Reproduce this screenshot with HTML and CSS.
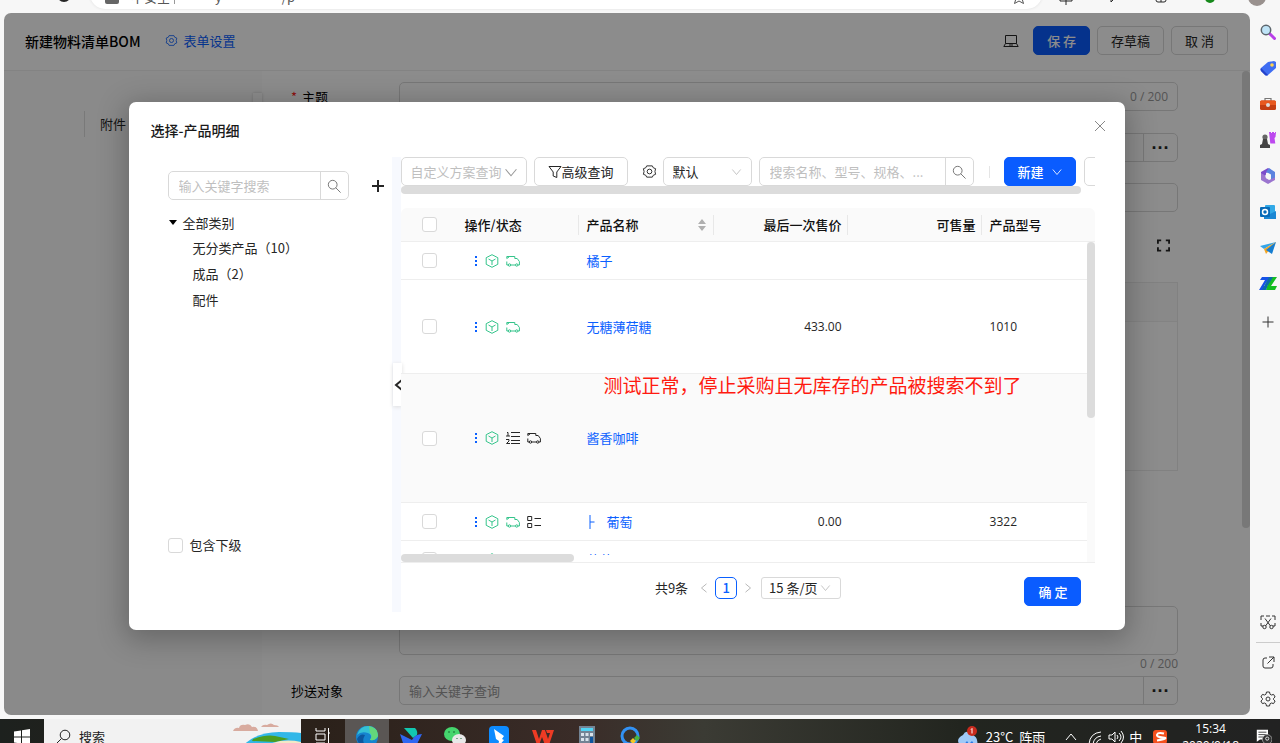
FILE: index.html
```html
<!DOCTYPE html>
<html lang="zh-CN">
<head>
<meta charset="utf-8">
<title>新建物料清单BOM</title>
<link rel="stylesheet" href="styles.css">
</head>
<body>
<svg class="defs" aria-hidden="true">
  <symbol id="search" viewBox="0 0 16 16"><circle cx="6.5" cy="6.5" r="5"/><path d="M10 10l5.500 5.500"/></symbol>
  <symbol id="down" viewBox="0 0 12 12"><path d="M1 3l5 6 5-6"/></symbol>
  <symbol id="left" viewBox="0 0 12 12"><path d="M9 1L3 6l6 5"/></symbol>
  <symbol id="right" viewBox="0 0 12 12"><path d="M3 1l6 5-6 5"/></symbol>
  <symbol id="nut" viewBox="0 0 16 16"><path d="M5 2h6l1 2 2.500 1-.7 3 .7 3-2.500 1-1 2H5l-1-2-2.500-1 .7-3-.7-3L4 4z"/><circle cx="8" cy="8" r="2.500"/></symbol>
  <symbol id="cube" viewBox="0 0 14 14"><path d="M7 .7l5.800 3v6.600L7 13.300l-5.800-3V3.700zM3.500 5L7 7l3.500-2M7 7v4"/></symbol>
  <symbol id="truck" viewBox="0 0 14 14"><path d="M2.500 11H.8V7.500M.8 4.500V2.500h8v2h2.400l2.200 3V11h-1.400M9.500 11h-5M.8 4.500L3 3"/><circle cx="3.500" cy="11" r="1.200"/><circle cx="10.700" cy="11" r="1.200"/></symbol>
  <symbol id="numlist" viewBox="0 0 14 14"><path d="M5 1.500h9M5 5.500h9M5 9.500h9M5 12.500h9M1 1.500h1v3.500M0 5h4M0 8.500h3v1.500L.5 12.500H4"/></symbol>
  <symbol id="detail" viewBox="0 0 14 14"><path d="M.7 1.500h4v4h-4zM.7 8.500h4v4h-4zM7.500 3.500H14M7.500 10.500H14"/></symbol>
  <symbol id="dots" viewBox="0 0 4 14"><path d="M1 2h2v2H1zM1 6h2v2H1zM1 10h2v2H1z"/></symbol>
</svg>

<div class="browser-top">
  <div class="browser-bar">
    <svg class="reload line" viewBox="0 0 16 16"><circle cx="8" cy="8" r="6"/></svg>
    <div class="address"><i class="lock"></i><span>不安全</span><i class="bar"></i><span class="url">y</span><span class="url-end">/p</span>
      <svg class="star line" viewBox="0 0 16 16"><path d="M8 2l2 4 5 .5-4 3 1.500 5L8 12l-4.500 2.500L5 9.500l-4-3L6 6z"/></svg></div>
    <div class="browser-tools">
      <svg class="line" viewBox="0 0 16 16"><path d="M2 4v8h12V4M8 2v14"/></svg>
      <svg class="line" viewBox="0 0 16 16"><path d="M5 3v10l5-5"/></svg>
      <svg class="line" viewBox="0 0 16 16"><rect x="3" y="2" width="10" height="11" rx="2"/><path d="M8 6v7"/></svg>
      <svg viewBox="0 0 16 16"><circle cx="9" cy="9" r="5" fill="#16891b"/><path d="M6.500 9l2 2 3-4" stroke="#fff" fill="none"/></svg>
      <i class="avatar"></i>
    </div>
  </div>
</div>

<div class="middle">
  <div class="app">
    <header class="app-head">
      <h1>新建物料清单BOM</h1>
      <a href="#" class="form-set"><svg class="line"><use href="#nut"/></svg>表单设置</a>
      <div class="head-actions">
        <svg class="line laptop" viewBox="0 0 16 16"><path d="M2.500 2.500h11v8h-11zM2.500 10.500L.8 13.500h14.400l-1.700-3M6 12h4"/></svg>
        <button class="btn primary">保 存</button>
        <button class="btn">存草稿</button>
        <button class="btn">取 消</button>
      </div>
    </header>
    <div class="app-body">
      <nav class="side"><a href="#">附件</a><i class="side-tab"></i></nav>
      <main class="form">
        <div class="row"><label for="topic"><b>*</b> 主题</label><div class="field"><input id="topic"><span class="count">0 / 200</span></div></div>
        <div class="row"><span class="lab"></span><div class="field"><input aria-label="物料"><button class="more" aria-label="更多">···</button></div></div>
        <div class="row"><span class="lab"></span><div class="field"><input aria-label="数量"></div></div>
        <div class="expand"><svg class="line" viewBox="0 0 14 14"><path d="M1 5V1.500h3.500M9.500 1.500H13V5M13 9v3.500H9.500M4.500 12.500H1V9"/></svg></div>
        <div class="sheet"></div>
        <div class="row area"><span class="lab"></span><div class="field"><textarea aria-label="备注"></textarea></div></div>
        <div class="area-count">0 / 200</div>
        <div class="row"><label for="cc">抄送对象</label><div class="field"><input id="cc" placeholder="输入关键字查询"><button class="more" aria-label="选择">···</button></div></div>
      </main>
      <i class="page-scroll"></i>
    </div>

    <div class="mask">
      <section class="modal" role="dialog" aria-label="选择-产品明细">
        <div class="modal-head"><h2>选择-产品明细</h2>
          <button class="close" aria-label="关闭"><svg class="line" viewBox="0 0 12 12"><path d="M1 1l10 10M11 1L1 11"/></svg></button></div>
        <div class="modal-body">
          <aside class="cats">
            <div class="cat-search">
              <div class="search"><input placeholder="输入关键字搜索" aria-label="输入关键字搜索"><button aria-label="搜索"><svg class="line"><use href="#search"/></svg></button></div>
              <button class="plus" aria-label="添加"><svg class="line" viewBox="0 0 14 14"><path d="M7 1v12M1 7h12"/></svg></button>
            </div>
            <ul class="tree"><li class="root"><svg viewBox="0 0 8 5"><path d="M0 0h8L4 5z"/></svg>全部类别</li><li>无分类产品（10）</li><li>成品（2）</li><li>配件</li></ul>
            <label class="sub"><input type="checkbox">包含下级</label>
          </aside>
          <div class="split"><button class="fold" aria-label="收起"><svg class="line"><use href="#left"/></svg></button></div>
          <div class="content">
            <div class="tools">
              <div class="sel plan"><select aria-label="方案"><option>自定义方案查询</option></select><svg class="line"><use href="#down"/></svg></div>
              <button class="btn adv"><svg class="line" viewBox="0 0 14 14"><path d="M1 1.500h12L8.800 7v5.500L5.200 11V7z"/></svg>高级查询</button>
              <svg class="line cog"><use href="#nut"/></svg>
              <div class="sel def"><select aria-label="视图"><option>默认</option></select><svg class="line"><use href="#down"/></svg></div>
              <div class="search wide"><input placeholder="搜索名称、型号、规格、..." aria-label="搜索产品"><button aria-label="搜索"><svg class="line"><use href="#search"/></svg></button></div>
              <i class="sep"></i>
              <button class="btn primary new">新建<svg class="line"><use href="#down"/></svg></button>
              <button class="btn rest" aria-label="更多操作"></button>
            </div>
            <div class="tools-scroll"></div>
            <div class="grid">
              <table>
                <colgroup><col class="c1"><col class="c2"><col class="c3"><col class="c4"><col class="c4"><col></colgroup>
                <thead><tr><th class="ck"><input type="checkbox" aria-label="全选"></th><th>操作/状态</th><th><span class="sortable">产品名称<svg viewBox="0 0 8 14"><path d="M0 6l4-5 4 5zM0 8h8l-4 5z"/></svg></span></th><th class="num">最后一次售价</th><th class="num">可售量</th><th>产品型号</th></tr></thead>
                <tbody>
                  <tr><td class="ck"><input type="checkbox" aria-label="橘子"></td><td><div class="ops"><svg class="dots"><use href="#dots"/></svg><svg class="line g"><use href="#cube"/></svg><svg class="line g"><use href="#truck"/></svg></div></td><td><a href="#">橘子</a></td><td></td><td></td><td></td></tr>
                  <tr class="tall"><td class="ck"><input type="checkbox" aria-label="无糖薄荷糖"></td><td><div class="ops"><svg class="dots"><use href="#dots"/></svg><svg class="line g"><use href="#cube"/></svg><svg class="line g"><use href="#truck"/></svg></div></td><td><a href="#">无糖薄荷糖</a></td><td class="num">433.00</td><td></td><td class="fig">1010</td></tr>
                  <tr class="taller"><td class="ck"><input type="checkbox" aria-label="酱香咖啡"></td><td><div class="ops"><svg class="dots"><use href="#dots"/></svg><svg class="line g"><use href="#cube"/></svg><svg class="line"><use href="#numlist"/></svg><svg class="line"><use href="#truck"/></svg></div></td><td><a href="#">酱香咖啡</a></td><td></td><td></td><td></td></tr>
                  <tr><td class="ck"><input type="checkbox" aria-label="葡萄"></td><td><div class="ops"><svg class="dots"><use href="#dots"/></svg><svg class="line g"><use href="#cube"/></svg><svg class="line g"><use href="#truck"/></svg><svg class="line"><use href="#detail"/></svg></div></td><td><a href="#" class="child"><svg class="line" viewBox="0 0 8 14"><path d="M2.500 0v14M2.500 7H7"/></svg>葡萄</a></td><td class="num">0.00</td><td></td><td class="fig">3322</td></tr>
                  <tr><td class="ck"><input type="checkbox" aria-label="葡萄"></td><td><div class="ops"><svg class="dots"><use href="#dots"/></svg><svg class="line g"><use href="#cube"/></svg><svg class="line"><use href="#numlist"/></svg><svg class="line g"><use href="#truck"/></svg></div></td><td><a href="#">葡萄</a></td><td></td><td></td><td></td></tr>
                </tbody>
              </table>
              <p class="note">测试正常，停止采购且无库存的产品被搜索不到了</p>
              <i class="vtrack"></i><i class="vbar"></i><i class="htrack"></i><i class="hbar"></i>
            </div>
            <div class="foot">
              <div class="pager"><span class="total">共9条</span><button aria-label="上一页"><svg class="line"><use href="#left"/></svg></button><button class="cur">1</button><button aria-label="下一页"><svg class="line"><use href="#right"/></svg></button>
                <div class="sel size"><select aria-label="每页条数"><option>15 条/页</option></select><svg class="line"><use href="#down"/></svg></div></div>
              <button class="btn primary ok">确 定</button>
            </div>
          </div>
        </div>
      </section>
    </div>
  </div>

  <aside class="edge">
    <svg viewBox="0 0 16 16"><path d="M9.500 9.500l5 5" stroke="#b83fe8" stroke-width="3" stroke-linecap="round"/><circle cx="6" cy="6" r="4.700" fill="#bfe4f7" stroke="#5d666d" stroke-width="1.500"/></svg>
    <svg viewBox="0 0 16 16"><path d="M8 2l6-1 2 1v6l-8 7q-1.500 1-3 0L1 11q-1-1.500 0-3z" fill="#3f6df2"/><path d="M1 8l7 7q-1.500 1-3 0L1 11q-1-1.500 0-3z" fill="#2543c9"/><circle cx="12" cy="5" r="1.800" fill="#ffd24d"/></svg>
    <svg viewBox="0 0 16 16"><path d="M5 5V2.500h6V5" fill="none" stroke="#777" stroke-width="1.200"/><rect y="4.500" width="16" height="9.500" rx="1.500" fill="#c43e13"/><path d="M0 6q0-1.500 1.500-1.500h13q1.500 0 1.500 1.500v3H0z" fill="#e8581f"/><circle cx="8" cy="9" r="2" fill="#ddd"/></svg>
    <svg viewBox="0 0 16 16"><path d="M9 0h2v1h1V0h2v1h1V0h1l-.5 5-1 1 .8 5.500h-5z" fill="#bd49ef"/><circle cx="5" cy="5" r="2.600" fill="#666"/><path d="M3 7h4l1 5 2 1v3H0v-3l2-1z" fill="#444"/></svg>
    <svg viewBox="0 0 16 16"><path d="M8 0L1 4v6l5-2.500V5l5-3z" fill="#7c4bcb"/><path d="M9 0l6 4v7l-4 2V6.500L6 4z" fill="#5b83df"/><path d="M1 5v7l7 4 7-4V9.500L9 12 6 10V8z" fill="#9b75cf"/><circle cx="8" cy="8" r="2.600" fill="#f7f7f7"/></svg>
    <svg viewBox="0 0 16 16"><rect x="5" y="1" width="10" height="9" rx="1" fill="#32a9e7"/><path d="M4 7l6 3 6-3v8H4z" fill="#1b87d3"/><rect y="3" width="10" height="10" rx="1" fill="#086bb8"/><circle cx="5" cy="8" r="2.500" fill="none" stroke="#fff" stroke-width="1.500"/></svg>
    <svg viewBox="0 0 16 16"><path d="M16 2L0 6l4 3z" fill="#35a5e8"/><path d="M16 2L4 9l2 5z" fill="#f5a623"/><path d="M16 2L6 10l6 4z" fill="#167ed1"/></svg>
    <svg class="zz" viewBox="0 0 18 16"><path d="M3 1h8L5 10h4l-2 4H0L6 4H1z" fill="#1652e8"/><path d="M11 1h7l-6 9h6l-2 4H7z" fill="#15bd22"/><path d="M10 1h4L6 14H3z" fill="#0a6ba8"/></svg>
    <svg class="line add" viewBox="0 0 16 16"><path d="M8 2.500v11M2.500 8h11"/></svg>
    <div class="edge-end">
      <svg class="line" viewBox="0 0 16 16"><path d="M3 12H1V9M1 6V2h3M6 2h4M12 2h3v4M15 9v3h-2M5 4.500l5.500 7.500M11 4.500L5.500 12"/><circle cx="4.500" cy="13" r="1.700"/><circle cx="11.500" cy="13" r="1.700"/></svg>
      <i></i>
      <svg class="line" viewBox="0 0 16 16"><path d="M7 3H5Q3 3 3 5v6q0 2 2 2h6q2 0 2-2V9M9 2h5v5M14 2L7.500 8.500"/></svg>
      <svg class="line" viewBox="0 0 16 16"><path d="M6.500 1h3l.6 2.300 1.300.7 2.200-.6 1.500 2.600L13.500 7.500v1l1.600 1.500-1.500 2.600-2.200-.6-1.300.7-.6 2.300h-3l-.6-2.300-1.300-.7-2.200.6L.9 10l1.600-1.500v-1L.9 6l1.500-2.600 2.200.6 1.300-.7z"/><circle cx="8" cy="8" r="2"/></svg>
    </div>
  </aside>
</div>

<footer class="taskbar">
  <div class="tasks">
    <button class="start" aria-label="开始"><svg viewBox="0 0 16 16"><path d="M0 2.500L7 1.500v6H0zM8 1.300L16 0v7.500H8zM0 8.500h7v6l-7-1zM8 8.500h8V16l-8-1.300z" fill="#fff"/></svg></button>
    <label class="find"><svg class="line" viewBox="0 0 16 16"><circle cx="10" cy="6" r="4.800"/><path d="M6.500 9.500L1 15"/></svg><input placeholder="搜索" aria-label="搜索">
      <svg class="scene" viewBox="0 0 68 36"><path d="M4 36Q14 14 46 13q14 0 22 1v22z" fill="#31b7e8"/><path d="M20 20q14-5 22-3l14 3-14 3-23-1z" fill="#4b9d1f"/><path d="M34 26q16-7 34-3v9H28z" fill="#f2e8c6"/><path d="M0 12q2-4 6-3 1-4 6-3 5-2 7 2 5-1 6 4zM28 8q2-3 6-2 4-3 7 0 4 0 5 2z" fill="#d8ab9f"/></svg></label>
    <button aria-label="任务视图"><svg class="line" viewBox="0 0 16 20"><path d="M1 1v3h9V1M1 7h9v6H1zM1 19v-3h9v3M13.500 1v18M13 6h2"/></svg></button>
    <button class="on" aria-label="Edge"><svg viewBox="0 0 22 22"><circle cx="11" cy="11" r="11" fill="#1684cf"/><path d="M1 9Q4 0 12 0q9 0 10 9-1 6-8 5 3-5-2-7-7-2-11 2z" fill="#35c1d4"/><path d="M13 0q9 2 9 10-2 5-8 4 3-4 0-7z" fill="#63d77b"/><path d="M9 9q-5 8 4 13-9 1-12-9 3-6 8-4z" fill="#0d579f"/></svg></button>
    <button aria-label="钉板"><svg viewBox="0 0 22 22"><path d="M4 2h11q3 3 2 7l-4 3z" fill="#12c8b0"/><path d="M0 8l12 6Q15 8 22 8l-6 12H4z" fill="#2f67f2"/></svg></button>
    <button aria-label="微信"><svg viewBox="0 0 22 22"><ellipse cx="8" cy="8" rx="8" ry="7" fill="#45d66d"/><ellipse cx="15" cy="14" rx="7" ry="6" fill="#e8e8e8"/><path d="M5 5v2M10 5v2M13 12v1M17 12v1" stroke="#176b35"/></svg></button>
    <button aria-label="飞鸟"><svg viewBox="0 0 22 22"><rect x="1" width="20" height="22" rx="4" fill="#0d8bff"/><path d="M6 3l10 7-2 3 2 1-6 7 1-6-3-2z" fill="#fff"/></svg></button>
    <button aria-label="WPS"><svg viewBox="0 0 22 22"><path d="M0 4h4l3 9 3-9h3l3 9 2-6h-3l-1-3h8l-5 15h-4l-3-8-3 8H5z" fill="#ed3b24"/></svg></button>
    <button aria-label="计算器"><svg viewBox="0 0 22 22"><rect x="3" width="16" height="22" fill="#738394"/><path d="M5 2h12v3H5z" fill="#51d4f4"/><path d="M5 7h3v3H5zM9.500 7h3v3h-3zM14 7h3v3h-3zM5 12h3v3H5zM9.500 12h3v3h-3z" fill="#d9e3eb"/><path d="M14 11h3v8h-3z" fill="#0e559f"/></svg></button>
    <button aria-label="会话"><svg viewBox="0 0 22 22"><circle cx="10" cy="10" r="8" fill="none" stroke="#3292f5" stroke-width="3"/><path d="M17 9l3 3-3 3-3-3z" fill="#49b33d"/><path d="M13 12l3 3-3 3-3-3z" fill="#f2c724"/></svg></button>
    <div class="tray">
      <svg class="weather" viewBox="0 0 22 22"><path d="M3 19q-5-6 3-10Q9 3 14 8q8 3 6 11z" fill="#9fc9f7"/><path d="M5 21l5-6 2 3 3-3 4 6z" fill="#2878e5"/><circle cx="15" cy="5" r="5" fill="#c82b1e"/><path d="M14 3.500l1-1v5" stroke="#fff" fill="none"/></svg>
      <span class="temp">23°C&nbsp; 阵雨</span>
      <svg class="line up" viewBox="0 0 12 12"><path d="M1 9l5-6 5 6"/></svg>
      <svg class="line" viewBox="0 0 16 16"><path d="M2 15Q3 4 14 3M6 15q1-7 8-8M9 15q1-4 5-5"/></svg>
      <svg class="line" viewBox="0 0 16 16"><path d="M1 6h3l3-3v10l-3-3H1zM9 6q2 2 0 4M11 4q4 4 0 8M13 2q5 6 0 12"/></svg>
      <span>中</span>
      <svg class="sogou" viewBox="0 0 16 16"><rect x="1" y="1" width="14" height="14" rx="3" fill="#f4501e"/><path d="M12 4.500Q6 3 5 5.500t6 3-6 3" stroke="#fff" stroke-width="2" fill="none"/></svg>
      <time>15:34<br>2020/9/18</time>
      <svg class="msg" viewBox="0 0 20 20"><path d="M1 1h14v12H5l-4 3z" fill="#fff"/><path d="M3 4h10M3 7h10M3 10h6" stroke="#222"/><circle cx="14" cy="13" r="6" fill="#333" stroke="#aaa"/><circle cx="14" cy="12" r="2" fill="none" stroke="#fff"/></svg>
    </div>
  </div>
</footer>
</body>
</html>
```
FILE: styles.css
```css
* { box-sizing: border-box; }
body {
  margin: 0; height: 100vh; overflow: hidden; display: flex; flex-direction: column;
  background: #f7f7f7; color: #262626;
  font: 13px/20px "Noto Sans CJK SC", sans-serif;
}
button, input, select, textarea { font: inherit; color: inherit; margin: 0; padding: 0; border: 0; background: none; min-width: 0; }
input, textarea, select { outline: 0; }
a { color: #0a60ff; text-decoration: none; }
h1, h2, p, ul { margin: 0; padding: 0; }
ul { list-style: none; }
svg { width: 16px; height: 16px; flex: none; display: block; }
.line { fill: none; stroke: currentColor; stroke-width: 1; }
.defs { position: absolute; width: 0; height: 0; }
::placeholder { color: #bfbfbf; opacity: 1; }
input[type=checkbox] { appearance: none; width: 15px; height: 15px; border: 1px solid #d9d9d9; border-radius: 3px; background: #fff; display: block; flex: none; }

.browser-top { flex: 0 0 13px; overflow: hidden; display: flex; flex-direction: column; justify-content: flex-end; }
.browser-bar { flex: none; height: 34px; padding-bottom: 4px; display: flex; align-items: center; }
.reload { margin: 2px 18px 0 56px; stroke-width: 2; }
.address { flex: 1; height: 30px; background: #fff; border-radius: 15px; box-shadow: 0 0 3px #ddd; display: flex; align-items: center; padding: 5px 15px 0; line-height: 16px; color: #555; }
.lock { width: 14px; height: 12px; background: #666; border-radius: 2px; margin: 2px 12px 0 0; }
.bar { width: 1px; height: 14px; background: #999; margin: 0 40px 0 4px; }
.url-end { margin-left: 60px; }
.star { margin-left: auto; }
.browser-tools { width: 238px; display: flex; justify-content: space-between; align-items: center; padding: 5px 14px 0 16px; }
.avatar { width: 18px; height: 18px; border-radius: 9px; background: #99918e; }

.middle { flex: 1; min-height: 0; display: flex; padding: 0 0 4px 4px; }
.app { flex: 1; min-width: 0; position: relative; overflow: hidden; border-radius: 7px; background: #fff; display: flex; flex-direction: column; }
.app-head { flex: none; height: 58px; border-bottom: 1px solid #eee; display: flex; align-items: center; padding: 0 22px 2px 21px; }
h1 { font-size: 14px; font-weight: 500; color: #000; }
.form-set { display: flex; align-items: center; gap: 6px; margin-left: 24px; }
.form-set svg { width: 13px; height: 13px; }
.head-actions { margin-left: auto; display: flex; gap: 7px; align-items: center; }
.laptop { margin-right: 7px; }
.btn { height: 29px; padding: 0 13px; border: 1px solid #d9d9d9; border-radius: 5px; background: #fff; display: flex; align-items: center; white-space: nowrap; flex: none; }
.primary { background: #0a5cff; border-color: #0a5cff; color: #fff; font-weight: 500; }
.app-body { flex: 1; min-height: 0; display: flex; position: relative; }
.side { flex: 0 0 258px; background: #fcfcfc; position: relative; padding: 40px 0 0 80px; }
.side a { display: block; color: #262626; border-left: 1px solid #ddd; padding: 3px 15px; }
.side-tab { position: absolute; right: 0; top: 22px; width: 9px; height: 40px; background: #fff; box-shadow: 0 0 3px #ccc; }
.form { flex: 1; margin-right: 43px; padding: 11px 29px 0; }
.row { display: flex; margin-bottom: 21px; }
.row label, .lab { flex: 0 0 108px; line-height: 30px; color: #000; }
.row b { color: #f22; font-weight: 400; margin-right: 2px; }
.field { flex: 1; height: 29px; border: 1px solid #d9d9d9; border-radius: 5px; display: flex; align-items: center; }
.field input { flex: 1; padding: 0 9px; }
.field ::placeholder, .count, .area-count { color: #999; }
.count { padding-right: 9px; }
.more { flex: none; width: 34px; height: 27px; border-left: 1px solid #d9d9d9; font: 700 18px/20px "Liberation Sans", sans-serif; }
.count, .area-count { font-family: "Open Sans", sans-serif; font-size: 12px; }
.expand { display: flex; justify-content: flex-end; padding: 6px 8px 0; margin-bottom: 30px; }
.expand svg { width: 13px; height: 13px; stroke-width: 2; }
.sheet { height: 189px; border: 1px solid #ececec; margin-bottom: 135px; background: linear-gradient(#fafafa 38px, #eee 38px, #eee 39px, #fff 39px); }
.area { margin: 0; }
.area .field { height: 49px; }
.area textarea { width: 100%; height: 100%; resize: none; }
.area-count { text-align: right; line-height: 17px; margin-bottom: 4px; }
.page-scroll { position: absolute; right: 0; top: 0; width: 8px; height: 71%; border-radius: 4px; background: #dadada; }

.mask { position: absolute; inset: 0; background: rgba(0,0,0,.45); padding-top: 89px; }
.modal { width: 80%; margin: 0 auto; background: #fff; border-radius: 7px; box-shadow: 0 6px 28px 4px rgba(0,0,0,.25); padding-bottom: 18px; }
.modal-head { height: 55px; display: flex; align-items: center; justify-content: space-between; padding: 1px 19px 0 22px; }
h2 { font-size: 14px; font-weight: 500; color: #1a1a1a; }
.close { padding: 0; margin-bottom: 8px; color: #888; }
.close svg { width: 12px; height: 12px; }
.modal-body { display: flex; min-height: 455px; }
.cats { flex: 0 0 263px; min-width: 0; padding: 14px 8px 57px 39px; display: flex; flex-direction: column; }
.cat-search { display: flex; align-items: center; gap: 22px; margin-bottom: 10px; }
.search { flex: 0 0 181px; min-width: 0; height: 29px; border: 1px solid #d9d9d9; border-radius: 5px; display: flex; }
.search input { flex: 1; width: 0; padding: 0 10px; text-overflow: ellipsis; }
.search button { flex: none; width: 28px; border-left: 1px solid #d9d9d9; display: grid; place-items: center; color: #666; }
.search svg { width: 14px; height: 14px; }
.plus svg { width: 14px; height: 14px; stroke-width: 2; }
.tree { flex: 1; line-height: 26px; }
.tree li { padding-left: 25px; }
.tree .root { display: flex; align-items: center; gap: 6px; padding-left: 1px; line-height: 25px; }
.root svg { width: 8px; height: 5px; }
.sub { display: flex; align-items: center; gap: 7px; }
.split { flex: 0 0 9px; background: #f7f9fe; position: relative; }
.fold { position: absolute; left: 1px; top: 206px; width: 9px; height: 43px; background: #fff; box-shadow: 0 1px 4px #ddd; display: grid; place-items: center; }
.fold svg { width: 12px; height: 14px; stroke-width: 2; }
.content { flex: 1; min-width: 0; padding-right: 30px; display: flex; flex-direction: column; }
.tools { display: flex; align-items: center; overflow: hidden; height: 29px; }
.sel { position: relative; height: 29px; border: 1px solid #d9d9d9; border-radius: 5px; flex: none; }
.sel select { appearance: none; width: 100%; height: 100%; padding: 0 9px; }
.sel svg { position: absolute; right: 9px; top: 9px; width: 11px; height: 10px; color: #bbb; pointer-events: none; }
.plan { width: 126px; margin-right: 7px; color: #bfbfbf; }
.plan svg { width: 14px; height: 13px; top: 8px; color: #999; right: 8px; }
.adv { width: 94px; justify-content: center; padding: 0; }
.adv svg { width: 14px; height: 14px; }
.cog { width: 15px; height: 15px; margin: 0 6px 0 14px; }
.def { width: 89px; margin-right: 7px; }
.tools .wide { flex: 0 0 215px; }
.sep { width: 1px; height: 12px; background: #e5e5e5; margin: 0 14px 0 15px; flex: none; }
.new { width: 72px; gap: 8px; margin-right: 8px; }
.new svg { width: 10px; height: 10px; }
.rest { width: 60px; }
.tools-scroll { height: 8px; width: 98%; border-radius: 4px; background: #dcdcdc; margin-bottom: 14px; }
.grid { position: relative; height: 355px; overflow: hidden; border-bottom: 1px solid #eee; border-radius: 6px 6px 0 0; }
table { width: 100%; table-layout: fixed; border-collapse: separate; border-spacing: 0; }
.c1 { width: 57px; } .c2 { width: 121px; } .c3 { width: 135px; } .c4 { width: 134px; }
th { height: 34px; padding: 0 7px; background: #fafafa; text-align: left; font-weight: 500; color: #111; border-bottom: 1px solid #eee; background-image: linear-gradient(#e8e8e8, #e8e8e8); background-size: 1px 20px; background-position: right center; background-repeat: no-repeat; }
th:first-child, th:last-child { background-image: none; }
td { height: 38px; padding: 0 8px; border-bottom: 1px solid #eee; }
.tall td { height: 94px; }
.taller td { height: 129px; background: #fafafa; }
.ck { padding: 0 21px; }
th.num, td.num { text-align: right; padding-right: 6px; }
td.num, .fig { font-family: "Open Sans", sans-serif; font-size: 12px; }
th:nth-child(3), th:last-child { padding-left: 8px; }
.sortable { display: flex; align-items: center; justify-content: space-between; }
.sortable svg { width: 8px; height: 14px; fill: #b0b0b0; margin-right: 1px; }
.ops { display: flex; align-items: center; gap: 7px; padding-left: 8px; }
.ops svg { width: 14px; height: 14px; }
.ops .dots { width: 4px; fill: #0a60ff; }
.ops .g { color: #35c48b; }
.child { display: flex; align-items: center; gap: 11px; }
.child svg { width: 9px; height: 14px; }
.note { position: absolute; left: 203px; top: 164px; font-size: 19px; line-height: 26px; color: #ff1a10; white-space: nowrap; }
.vtrack, .vbar, .htrack, .hbar { position: absolute; }
.vtrack { right: 0; top: 34px; bottom: 0; width: 8px; background: #fafafa; }
.vbar { right: 0; top: 34px; width: 8px; height: 176px; border-radius: 4px; background: #dcdcdc; }
.htrack { left: 0; right: 8px; bottom: 0; height: 7px; background: #fff; }
.hbar { left: 0; bottom: 0; width: 173px; height: 8px; border-radius: 4px; background: #dcdcdc; }
.foot { display: grid; grid-template-columns: 1fr auto 1fr; padding-top: 14px; }
.pager { grid-column: 2; display: flex; align-items: center; height: 22px; }
.pager > button { width: 22px; height: 22px; display: grid; place-items: center; color: #aaa; }
.pager > button svg { width: 10px; height: 10px; }
.total { margin-right: 5px; }
.pager .cur { border: 1px solid #0a60ff; border-radius: 5px; color: #0a60ff; font-weight: 500; }
.pager .size { width: 80px; height: 22px; margin-left: 2px; border-radius: 3px; }
.size select { padding: 0 7px; line-height: 18px; }
.size svg { top: 5px; }
.ok { justify-self: end; margin-right: 14px; }

.edge { flex: 0 0 30px; padding: 11px 0 8px 6px; display: flex; flex-direction: column; align-items: center; gap: 20px; color: #333; }
.edge .zz { width: 18px; }
.edge-end { align-self: stretch; margin-top: auto; display: flex; flex-direction: column; align-items: center; gap: 20px; }
.edge-end i { width: 100%; height: 1px; background: #ccc; margin: -8px 0; }
.edge .add { margin-top: 2px; }

.taskbar { flex: 0 0 24px; overflow: hidden; background: linear-gradient(90deg, #1d211e, #2b211a 25%, #3a2c28 45%, #3b3b34 55%, #22251f 75%, #222); color: #fff; }
.tasks { height: 36px; display: flex; }
.tasks > button { width: 44px; display: grid; place-items: center; }
.tasks > button svg { width: 22px; height: 22px; }
.tasks > .start svg, .tasks > button .line { width: 16px; }
.tasks > button.on { background: #5a5654; }
.find { flex: 0 0 257px; background: #f2f2f2; color: #222; display: flex; align-items: center; padding-left: 11px; gap: 8px; }
.find input { flex: 1; }
.find ::placeholder { color: #222; }
.find .scene { width: 68px; height: 36px; }
.tray { margin-left: auto; display: flex; align-items: center; gap: 5px; padding-right: 8px; }
.tray .weather { width: 22px; height: 22px; }
.temp { white-space: nowrap; margin-left: 2px; }
.tray .up { width: 12px; margin: 0 5px 0 15px; }
.tray .sogou { margin: 0 9px 0 5px; }
time { font: 12px/17px "Open Sans", sans-serif; text-align: center; margin-right: 12px; }
```
